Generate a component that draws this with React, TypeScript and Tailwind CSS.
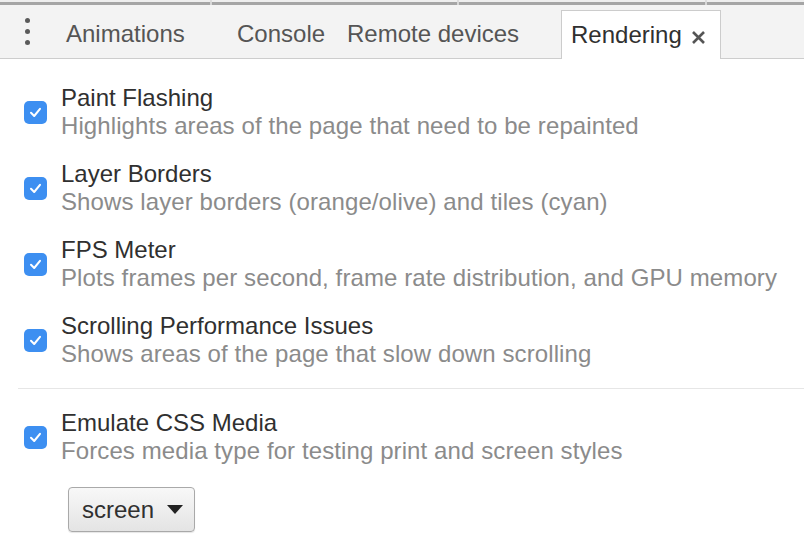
import React from "react";

const items = [
  { t: "Paint Flashing", d: "Highlights areas of the page that need to be repainted" },
  { t: "Layer Borders", d: "Shows layer borders (orange/olive) and tiles (cyan)" },
  { t: "FPS Meter", d: "Plots frames per second, frame rate distribution, and GPU memory" },
  { t: "Scrolling Performance Issues", d: "Shows areas of the page that slow down scrolling" },
];

function Check() {
  return (
    <div className="w-[23px] h-[23px] rounded-[5px] bg-[#3d8ff1] flex items-center justify-center shrink-0">
      <svg width="15" height="15" viewBox="0 0 15 15">
        <path d="M3 7.8 L6.2 11 L12 3.8" fill="none" stroke="white" strokeWidth="2" strokeLinecap="round" strokeLinejoin="round" />
      </svg>
    </div>
  );
}

function Item({ t, d }: { t: string; d: string }) {
  return (
    <div className="flex items-center">
      <div className="w-[61px] pl-[24px] flex">
        <Check />
      </div>
      <div className="flex flex-col">
        <div className="h-[28px] leading-[28px] text-[#303030] whitespace-nowrap">{t}</div>
        <div className="h-[28px] leading-[28px] text-[#8b8b8b] whitespace-nowrap tracking-[0.1px]">{d}</div>
      </div>
    </div>
  );
}

export default function App() {
  return (
    <div
      className="w-[804px] h-[540px] bg-white overflow-hidden text-[24px]"
      style={{ fontFamily: '"Liberation Sans", Arial, sans-serif' }}
    >
      <div className="h-[2px] bg-[#eeeeee] flex">
        <div className="w-[210px]" />
        <div className="w-[2px] bg-[#dcdcdc]" />
        <div className="w-[245px]" />
        <div className="w-[2px] bg-[#dcdcdc]" />
        <div className="w-[246px]" />
        <div className="w-[2px] bg-[#dcdcdc]" />
      </div>
      <div className="h-[3px] bg-[#a5a5a5] flex">
        <div className="w-[210px]" />
        <div className="w-[2px] bg-[#d6d6d6]" />
        <div className="w-[245px]" />
        <div className="w-[2px] bg-[#d6d6d6]" />
        <div className="w-[246px]" />
        <div className="w-[2px] bg-[#d6d6d6]" />
      </div>
      <div className="h-[54px] bg-[#f3f3f3] border-b border-[#cdcdcd] flex items-end">
        <div className="w-[54px] h-full flex flex-col items-center justify-center gap-[6px]">
          <div className="w-[5px] h-[5px] rounded-full bg-[#5a5a5a]" />
          <div className="w-[5px] h-[5px] rounded-full bg-[#5a5a5a]" />
          <div className="w-[5px] h-[5px] rounded-full bg-[#5a5a5a]" />
        </div>
        <div className="h-full flex items-center pl-[12px] w-[183px] text-[#555555] pt-[4px] whitespace-nowrap">Animations</div>
        <div className="h-full flex items-center w-[110px] text-[#555555] pt-[4px] whitespace-nowrap">Console</div>
        <div className="h-full flex items-center w-[214px] text-[#555555] pt-[4px] whitespace-nowrap">Remote devices</div>
        <div className="h-[49px] mb-[-1px] w-[160px] bg-white border border-[#cccccc] border-b-0 flex items-center pl-[9px] text-[#303030] whitespace-nowrap">
          <span>Rendering</span>
          <svg className="ml-[9px] mt-[5px]" width="15" height="15" viewBox="0 0 15 15">
            <path d="M2 2 L13 13 M13 2 L2 13" stroke="#555" strokeWidth="2.6" strokeLinecap="butt" />
          </svg>
        </div>
      </div>
      <div className="pt-[25px] flex flex-col gap-[20px]">
        {items.map((it) => (
          <Item key={it.t} t={it.t} d={it.d} />
        ))}
      </div>
      <div className="ml-[18px] mt-[20px] h-px bg-[#e6e6e6]" />
      <div className="pt-[20px]">
        <Item t="Emulate CSS Media" d="Forces media type for testing print and screen styles" />
      </div>
      <div className="pl-[68px] pt-[22px]">
        <div className="w-[127px] h-[45px] rounded-[4px] border border-[#a9a9a9] bg-gradient-to-b from-[#f8f8f8] to-[#e4e4e4] shadow-[0_1px_1px_rgba(0,0,0,0.1)] flex items-center pl-[13px] text-[#303030]">
          <span>screen</span>
          <svg className="ml-[13px]" width="16" height="9" viewBox="0 0 16 9">
            <path d="M0 0 L16 0 L8 9 Z" fill="#222" />
          </svg>
        </div>
      </div>
    </div>
  );
}
